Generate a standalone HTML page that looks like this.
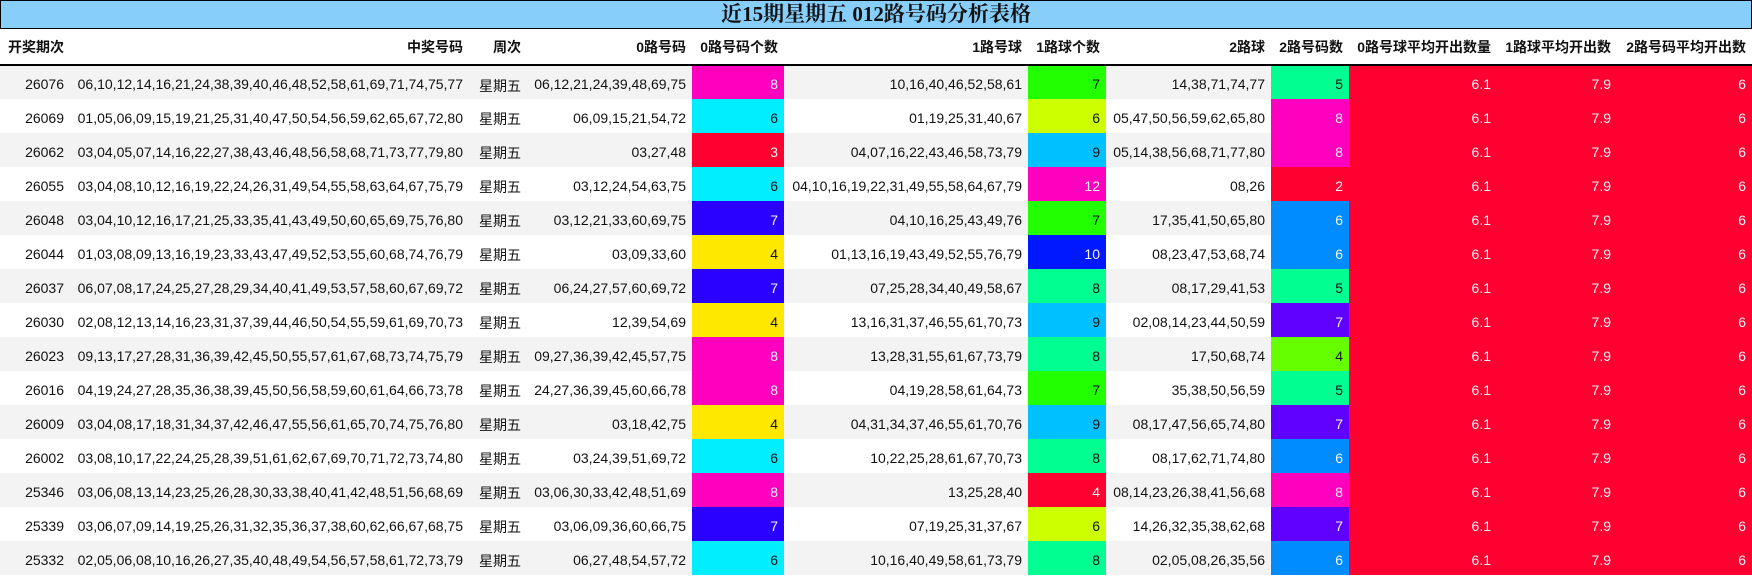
<!DOCTYPE html>
<html><head><meta charset="utf-8">
<style>
*{margin:0;padding:0;box-sizing:border-box}
body{width:1752px;height:576px;overflow:hidden;background:#fff;font-family:"Liberation Sans","Noto Sans CJK SC",sans-serif;font-size:14px;color:#111}
.title{height:29px;background:#87cefa;border:1.5px solid #000;text-align:center;font-weight:bold;font-size:21px;line-height:26px;font-family:"Liberation Serif","Noto Serif CJK SC",serif}
table{border-collapse:collapse;table-layout:fixed;width:1752px}
th{height:36px;font-weight:bold;text-align:right;padding-right:6px;border-bottom:2px solid #000;white-space:nowrap}
td{height:34px;text-align:right;padding-right:6px;white-space:nowrap;padding-top:3px}
td.wk{padding-top:6px}
tbody tr:nth-child(odd){background:#f3f3f3}
tbody tr:nth-child(even){background:#fff}
td.w{color:#f4f4f4}
td.r{background:#ff0030;color:#f4f4f4}
.m{background:#ff00bf}.c{background:#00eeff}.rd{background:#ff0030}.v{background:#2a00ff}.y{background:#ffe800}
.g{background:#22ff00}.l{background:#ccff00}.s{background:#00c0ff}.sp{background:#00ff90}.b{background:#0018ff}
.az{background:#008cff}.p{background:#6000ff}.g4{background:#66ff00}
th:first-child{text-align:left;padding-left:8px}
</style></head><body>
<div class="title">近15期星期五 012路号码分析表格</div>
<table>
<colgroup><col style="width:70px"><col style="width:399px"><col style="width:58px"><col style="width:165px"><col style="width:92px"><col style="width:244px"><col style="width:78px"><col style="width:165px"><col style="width:78px"><col style="width:148px"><col style="width:120px"><col style="width:135px"></colgroup>
<thead><tr><th>开奖期次</th><th>中奖号码</th><th>周次</th><th>0路号码</th><th>0路号码个数</th><th>1路号球</th><th>1路球个数</th><th>2路球</th><th>2路号码数</th><th>0路号球平均开出数量</th><th>1路球平均开出数</th><th>2路号码平均开出数</th></tr></thead>
<tbody>
<tr><td>26076</td><td>06,10,12,14,16,21,24,38,39,40,46,48,52,58,61,69,71,74,75,77</td><td class="wk">星期五</td><td>06,12,21,24,39,48,69,75</td><td class="m w">8</td><td>10,16,40,46,52,58,61</td><td class="g">7</td><td>14,38,71,74,77</td><td class="sp">5</td><td class="r">6.1</td><td class="r">7.9</td><td class="r">6</td></tr>
<tr><td>26069</td><td>01,05,06,09,15,19,21,25,31,40,47,50,54,56,59,62,65,67,72,80</td><td class="wk">星期五</td><td>06,09,15,21,54,72</td><td class="c">6</td><td>01,19,25,31,40,67</td><td class="l">6</td><td>05,47,50,56,59,62,65,80</td><td class="m w">8</td><td class="r">6.1</td><td class="r">7.9</td><td class="r">6</td></tr>
<tr><td>26062</td><td>03,04,05,07,14,16,22,27,38,43,46,48,56,58,68,71,73,77,79,80</td><td class="wk">星期五</td><td>03,27,48</td><td class="rd w">3</td><td>04,07,16,22,43,46,58,73,79</td><td class="s">9</td><td>05,14,38,56,68,71,77,80</td><td class="m w">8</td><td class="r">6.1</td><td class="r">7.9</td><td class="r">6</td></tr>
<tr><td>26055</td><td>03,04,08,10,12,16,19,22,24,26,31,49,54,55,58,63,64,67,75,79</td><td class="wk">星期五</td><td>03,12,24,54,63,75</td><td class="c">6</td><td>04,10,16,19,22,31,49,55,58,64,67,79</td><td class="m w">12</td><td>08,26</td><td class="rd w">2</td><td class="r">6.1</td><td class="r">7.9</td><td class="r">6</td></tr>
<tr><td>26048</td><td>03,04,10,12,16,17,21,25,33,35,41,43,49,50,60,65,69,75,76,80</td><td class="wk">星期五</td><td>03,12,21,33,60,69,75</td><td class="v w">7</td><td>04,10,16,25,43,49,76</td><td class="g">7</td><td>17,35,41,50,65,80</td><td class="az w">6</td><td class="r">6.1</td><td class="r">7.9</td><td class="r">6</td></tr>
<tr><td>26044</td><td>01,03,08,09,13,16,19,23,33,43,47,49,52,53,55,60,68,74,76,79</td><td class="wk">星期五</td><td>03,09,33,60</td><td class="y">4</td><td>01,13,16,19,43,49,52,55,76,79</td><td class="b w">10</td><td>08,23,47,53,68,74</td><td class="az w">6</td><td class="r">6.1</td><td class="r">7.9</td><td class="r">6</td></tr>
<tr><td>26037</td><td>06,07,08,17,24,25,27,28,29,34,40,41,49,53,57,58,60,67,69,72</td><td class="wk">星期五</td><td>06,24,27,57,60,69,72</td><td class="v w">7</td><td>07,25,28,34,40,49,58,67</td><td class="sp">8</td><td>08,17,29,41,53</td><td class="sp">5</td><td class="r">6.1</td><td class="r">7.9</td><td class="r">6</td></tr>
<tr><td>26030</td><td>02,08,12,13,14,16,23,31,37,39,44,46,50,54,55,59,61,69,70,73</td><td class="wk">星期五</td><td>12,39,54,69</td><td class="y">4</td><td>13,16,31,37,46,55,61,70,73</td><td class="s">9</td><td>02,08,14,23,44,50,59</td><td class="p w">7</td><td class="r">6.1</td><td class="r">7.9</td><td class="r">6</td></tr>
<tr><td>26023</td><td>09,13,17,27,28,31,36,39,42,45,50,55,57,61,67,68,73,74,75,79</td><td class="wk">星期五</td><td>09,27,36,39,42,45,57,75</td><td class="m w">8</td><td>13,28,31,55,61,67,73,79</td><td class="sp">8</td><td>17,50,68,74</td><td class="g4">4</td><td class="r">6.1</td><td class="r">7.9</td><td class="r">6</td></tr>
<tr><td>26016</td><td>04,19,24,27,28,35,36,38,39,45,50,56,58,59,60,61,64,66,73,78</td><td class="wk">星期五</td><td>24,27,36,39,45,60,66,78</td><td class="m w">8</td><td>04,19,28,58,61,64,73</td><td class="g">7</td><td>35,38,50,56,59</td><td class="sp">5</td><td class="r">6.1</td><td class="r">7.9</td><td class="r">6</td></tr>
<tr><td>26009</td><td>03,04,08,17,18,31,34,37,42,46,47,55,56,61,65,70,74,75,76,80</td><td class="wk">星期五</td><td>03,18,42,75</td><td class="y">4</td><td>04,31,34,37,46,55,61,70,76</td><td class="s">9</td><td>08,17,47,56,65,74,80</td><td class="p w">7</td><td class="r">6.1</td><td class="r">7.9</td><td class="r">6</td></tr>
<tr><td>26002</td><td>03,08,10,17,22,24,25,28,39,51,61,62,67,69,70,71,72,73,74,80</td><td class="wk">星期五</td><td>03,24,39,51,69,72</td><td class="c">6</td><td>10,22,25,28,61,67,70,73</td><td class="sp">8</td><td>08,17,62,71,74,80</td><td class="az w">6</td><td class="r">6.1</td><td class="r">7.9</td><td class="r">6</td></tr>
<tr><td>25346</td><td>03,06,08,13,14,23,25,26,28,30,33,38,40,41,42,48,51,56,68,69</td><td class="wk">星期五</td><td>03,06,30,33,42,48,51,69</td><td class="m w">8</td><td>13,25,28,40</td><td class="rd w">4</td><td>08,14,23,26,38,41,56,68</td><td class="m w">8</td><td class="r">6.1</td><td class="r">7.9</td><td class="r">6</td></tr>
<tr><td>25339</td><td>03,06,07,09,14,19,25,26,31,32,35,36,37,38,60,62,66,67,68,75</td><td class="wk">星期五</td><td>03,06,09,36,60,66,75</td><td class="v w">7</td><td>07,19,25,31,37,67</td><td class="l">6</td><td>14,26,32,35,38,62,68</td><td class="p w">7</td><td class="r">6.1</td><td class="r">7.9</td><td class="r">6</td></tr>
<tr><td>25332</td><td>02,05,06,08,10,16,26,27,35,40,48,49,54,56,57,58,61,72,73,79</td><td class="wk">星期五</td><td>06,27,48,54,57,72</td><td class="c">6</td><td>10,16,40,49,58,61,73,79</td><td class="sp">8</td><td>02,05,08,26,35,56</td><td class="az w">6</td><td class="r">6.1</td><td class="r">7.9</td><td class="r">6</td></tr>
</tbody></table>
</body></html>
